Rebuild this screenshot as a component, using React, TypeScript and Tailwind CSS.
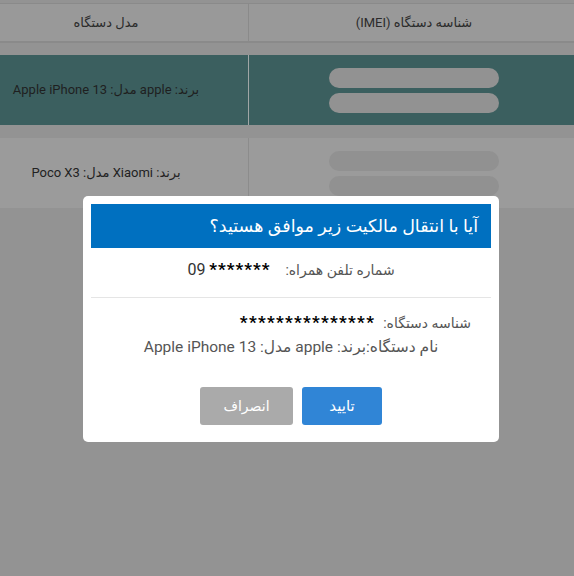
export default function App() {
  const font = { fontFamily: 'Roboto, "DejaVu Sans", sans-serif' };
  return (
    <div dir="ltr" className="relative h-[576px] w-[574px] overflow-hidden bg-[#939393]" style={font}>
      {/* Table behind the dialog */}
      <div className="ml-[-36px] w-[615px] pt-[3px]">
        <div className="flex h-[40px] border-t border-b-2 border-[#8a8a8a] bg-[#999999] text-[13px] text-[#2b2b2b]">
          <div dir="rtl" className="flex w-[284px] items-center justify-center">مدل دستگاه</div>
          <div className="w-[1px] bg-[#8a8a8a]" />
          <div dir="rtl" className="flex w-[330px] items-center justify-center">شناسه دستگاه (IMEI)</div>
        </div>

        <div className="mt-[12px] flex h-[70px] bg-[#3b5f5f] text-[13px] text-[#1f1f1f]">
          <div dir="rtl" className="flex w-[284px] items-center justify-center">برند: apple مدل: Apple iPhone 13</div>
          <div className="w-[1px] bg-[#a0a6a6]" />
          <div className="flex w-[330px] flex-col items-center justify-center gap-[5px]">
            <div className="h-[20px] w-[170px] rounded-full bg-[#929292]" />
            <div className="h-[20px] w-[170px] rounded-full bg-[#929292]" />
          </div>
        </div>

        <div className="mt-[13px] flex h-[70px] bg-[#9b9b9b] text-[13px] text-[#222]">
          <div dir="rtl" className="flex w-[284px] items-center justify-center">برند: Xiaomi مدل: Poco X3</div>
          <div className="w-[1px] bg-[#8c8c8c]" />
          <div className="flex w-[330px] flex-col items-center justify-center gap-[5px]">
            <div className="h-[20px] w-[170px] rounded-full bg-[#919191]" />
            <div className="h-[20px] w-[170px] rounded-full bg-[#919191]" />
          </div>
        </div>
      </div>

      {/* Confirmation dialog */}
      <div dir="rtl" className="absolute left-[83px] top-[196px] w-[416px] rounded-[5px] bg-white p-2">
        <div className="flex h-[44px] items-center bg-[#0070c0] pr-[13px] text-[17.5px] text-white">
          آیا با انتقال مالکیت زیر موافق هستید؟
        </div>

        <div className="mt-[10px] flex h-[24px] items-center justify-center gap-[15px] text-[14px] text-[#555]">
          <span>شماره تلفن همراه:</span>
          <span dir="ltr" className="text-[16px] text-[#333]">
            09 <b className="text-[17px] tracking-[1px] text-black">*******</b>
          </span>
        </div>

        <div className="mt-[15px] border-t border-[#e5e5e5]" />

        <div className="mt-[13px] flex h-[24px] items-center gap-[8px] pr-[20px] text-[14px] text-[#555]">
          <span>شناسه دستگاه:</span>
          <b className="text-[17px] tracking-[1.3px] text-black">***************</b>
        </div>

        <div className="mt-[1px] flex h-[24px] items-center justify-center text-[15.5px] text-[#555]">
          نام دستگاه:برند: apple مدل: Apple iPhone 13
        </div>

        <div className="mb-[9px] mt-[27px] flex justify-center gap-[9px]">
          <button className="h-[38px] w-[80px] rounded-[3px] bg-[#3085d6] text-[15px] text-white">تایید</button>
          <button className="h-[38px] w-[93px] rounded-[3px] bg-[#aaaaaa] text-[14px] text-white">انصراف</button>
        </div>
      </div>
    </div>
  );
}
